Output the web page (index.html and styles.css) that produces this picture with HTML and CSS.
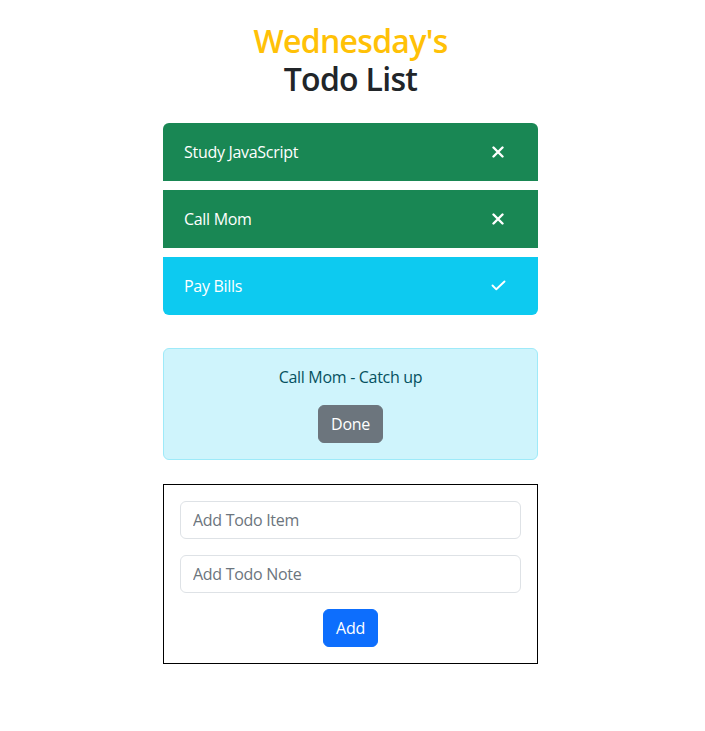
FILE: index.html
```
<!DOCTYPE html>
<html lang="en">
<head>
<meta charset="utf-8">
<title>Todo List</title>
<link rel="stylesheet" href="styles.css">
</head>
<body>
<main class="app">
  <h2 class="title"><span class="day">Wednesday's</span><br>Todo List</h2>
  <ul class="todo-list">
    <li class="todo-item todo-item--open">
      <span class="todo-text">Study JavaScript</span>
      <span class="todo-icon"><svg width="12" height="12" viewBox="0 0 12 12"><path d="M1.5 1.5 L10.5 10.5 M10.5 1.5 L1.5 10.5" stroke="#fff" stroke-width="2.4" stroke-linecap="round" fill="none"/></svg></span>
    </li>
    <li class="todo-item todo-item--open">
      <span class="todo-text">Call Mom</span>
      <span class="todo-icon"><svg width="12" height="12" viewBox="0 0 12 12"><path d="M1.5 1.5 L10.5 10.5 M10.5 1.5 L1.5 10.5" stroke="#fff" stroke-width="2.4" stroke-linecap="round" fill="none"/></svg></span>
    </li>
    <li class="todo-item todo-item--done">
      <span class="todo-text">Pay Bills</span>
      <span class="todo-icon"><svg width="15" height="11" viewBox="0 0 15 11"><path d="M1.5 5.5 L5.3 9.3 L13.5 1.5" stroke="#fff" stroke-width="1.9" stroke-linecap="round" stroke-linejoin="round" fill="none"/></svg></span>
    </li>
  </ul>
  <div class="note">
    <p class="note-text">Call Mom - Catch up</p>
    <button class="btn btn-secondary" type="button">Done</button>
  </div>
  <form class="add-form">
    <input class="field" type="text" placeholder="Add Todo Item">
    <input class="field" type="text" placeholder="Add Todo Note">
    <button class="btn btn-primary" type="button">Add</button>
  </form>
</main>
</body>
</html>
```
FILE: styles.css
```
* { box-sizing: border-box; }
body {
  margin: 0;
  padding-right: 4px;
  font-family: "Open Sans", "Noto Sans", sans-serif;
  font-size: 16px;
  line-height: 1.5;
  letter-spacing: -0.3px;
  color: #212529;
  background: #fff;
}
.app {
  width: 375px;
  margin: 0 auto;
  padding-top: 22px;
}
.title {
  margin: 0 0 24px;
  font-size: 32px;
  line-height: 1.2;
  font-weight: 600;
  letter-spacing: -0.7px;
  text-align: center;
  color: #212529;
}
.day { color: #ffc107; }
.todo-list {
  list-style: none;
  margin: 0 0 33px;
  padding: 0;
  display: flex;
  flex-direction: column;
  gap: 9px;
}
.todo-item {
  height: 58px;
  display: flex;
  align-items: center;
  justify-content: space-between;
  padding: 0 32px 0 21px;
  color: #fff;
}
.todo-item:first-child { border-radius: 6px 6px 0 0; }
.todo-item:last-child { border-radius: 0 0 6px 6px; }
.todo-item--open { background: #198754; }
.todo-item--done { background: #0dcaf0; }
.todo-icon {
  width: 16px;
  display: flex;
  justify-content: center;
  align-items: center;
}
.todo-icon svg { display: block; }
.note {
  background: #cff4fc;
  border: 1px solid #9eeaf9;
  border-radius: 6px;
  padding: 16px;
  text-align: center;
  color: #055160;
  margin-bottom: 24px;
}
.note-text { margin: 0 0 16px; }
.btn {
  font-family: inherit;
  font-size: 16px;
  line-height: 24px;
  letter-spacing: -0.3px;
  padding: 6px 12px;
  border: 1px solid transparent;
  border-radius: 6px;
  color: #fff;
  cursor: pointer;
}
.btn-secondary { background: #6c757d; border-color: #6c757d; }
.btn-primary { background: #0d6efd; border-color: #0d6efd; }
.add-form {
  border: 1px solid #000;
  padding: 16px;
  display: flex;
  flex-direction: column;
  gap: 16px;
}
.add-form .btn { align-self: center; }
.field {
  height: 38px;
  border: 1px solid #dee2e6;
  border-radius: 6px;
  padding: 6px 12px;
  font-family: inherit;
  font-size: 16px;
  letter-spacing: -0.3px;
  color: #212529;
}
.field::placeholder { color: #6c757d; opacity: 1; }
```
